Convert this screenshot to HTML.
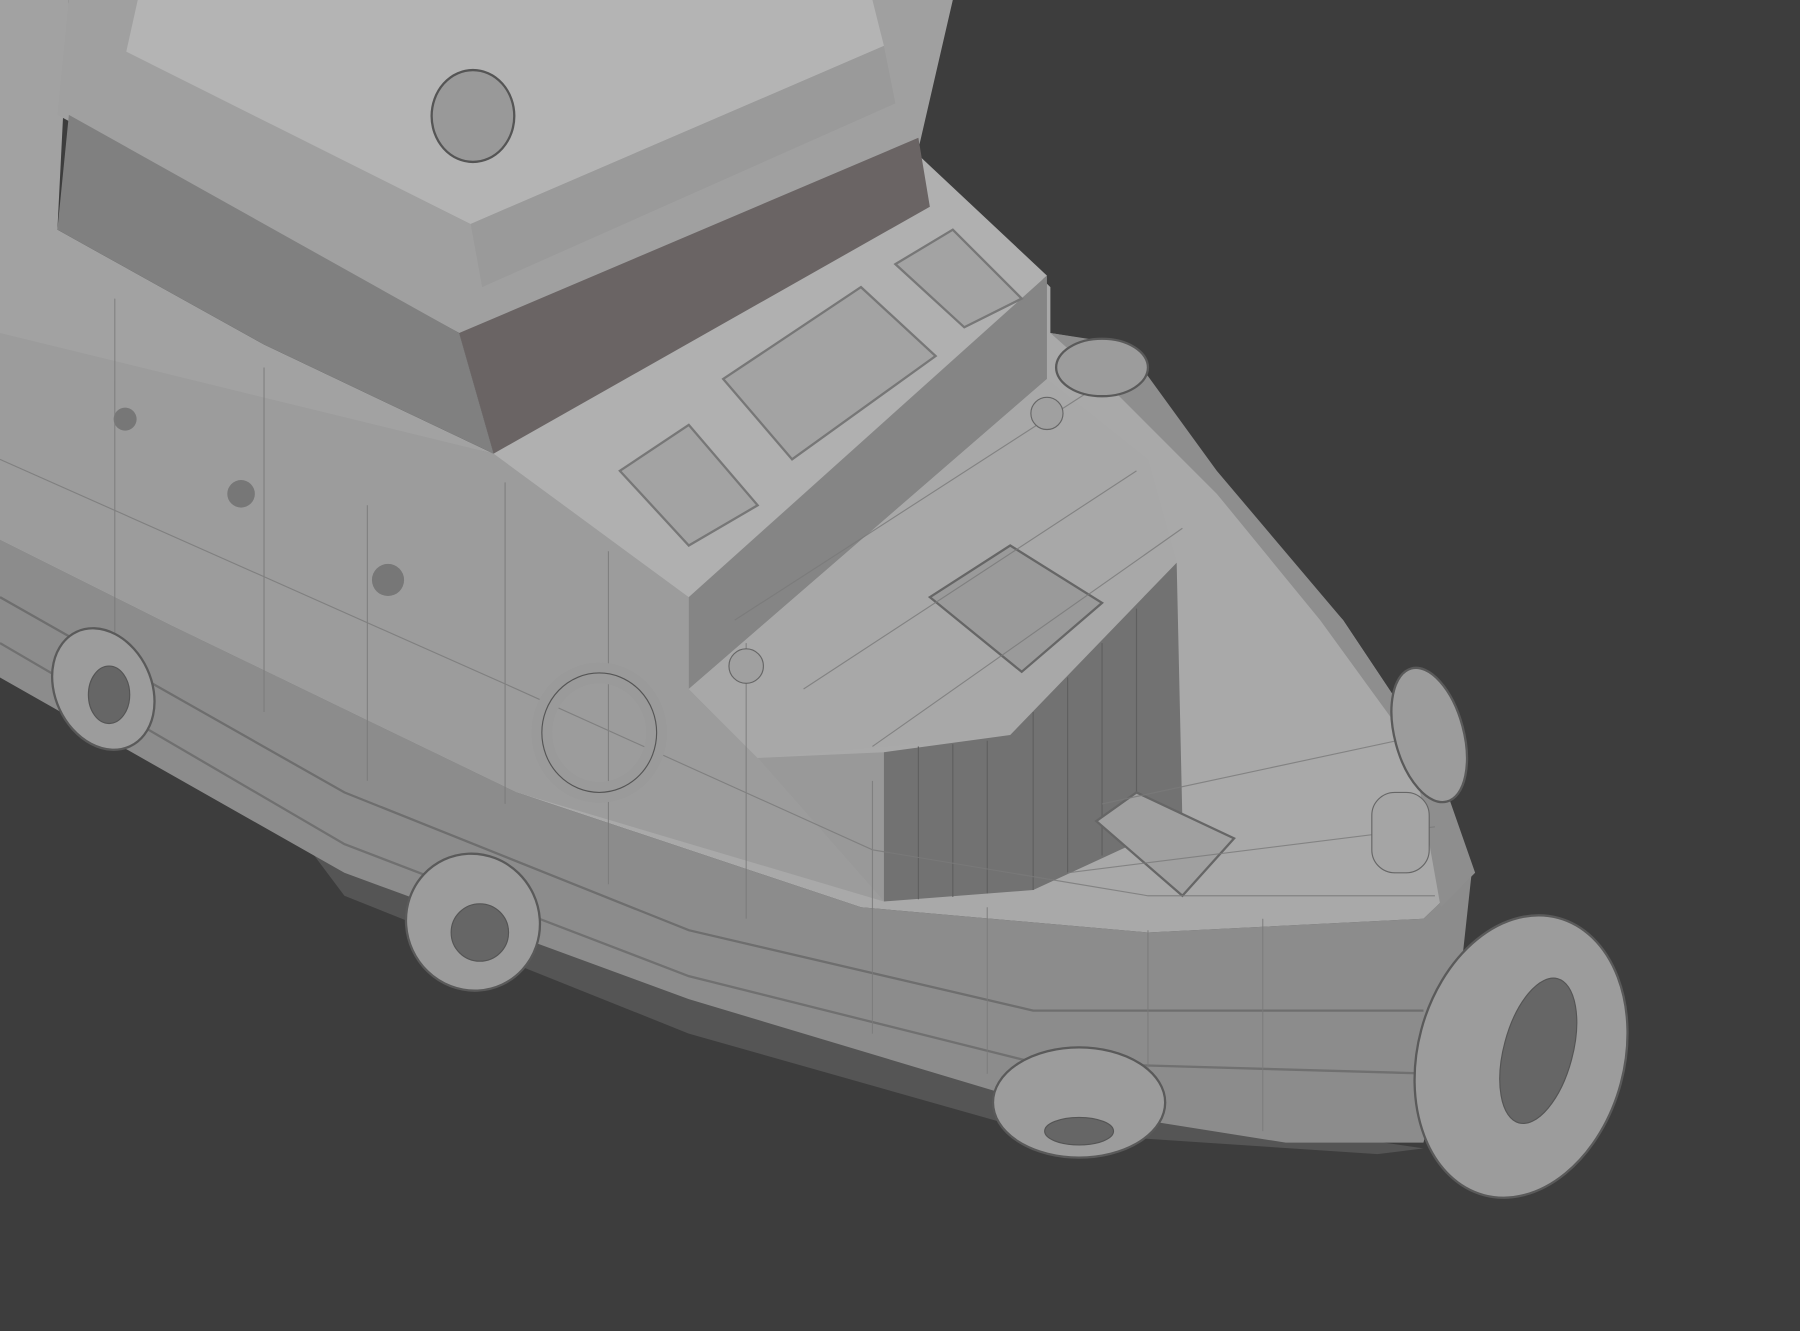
<!DOCTYPE html>
<html><head><meta charset="utf-8"><style>html,body{margin:0;padding:0;background:#3d3d3d;overflow:hidden}svg{display:block}</style></head>
<body>
<svg width="1800" height="1331" viewBox="0 0 1568 1159" preserveAspectRatio="none" xmlns="http://www.w3.org/2000/svg">
<rect width="1568" height="1159" fill="#3d3d3d"/>
<path d="M270,740 L600,860 L900,950 L1240,1000 L1200,1005 L900,985 L600,900 L300,780 Z" fill="#555"/>
<path d="M0,470 L150,545 L450,690 L750,790 L1000,812 L1240,800 L1282,760 L1270,870 L1240,995 L1120,995 L900,960 L600,870 L300,760 L0,590 Z" fill="#8c8c8c"/>
<path d="M0,520 L300,690 L600,810 L900,880 L1240,880" fill="none" stroke="#6e6e6e" stroke-width="2"/>
<path d="M0,560 L300,735 L600,850 L900,925 L1250,935" fill="none" stroke="#707070" stroke-width="2"/>
<path d="M0,0 L60,0 L50,200 L230,300 L430,395 L0,300 Z" fill="#a2a2a2"/>
<path d="M0,300 L430,395 L800,135 L915,250 L915,290 L975,300 L1060,420 L1170,540 L1250,660 L1282,760 L1240,800 L1000,812 L750,790 L450,690 L150,545 L0,470 Z" fill="#a9a9a9"/>
<path d="M915,290 L980,300 L1060,410 L1170,540 L1250,660 L1285,760 L1255,790 L1230,650 L1150,540 L1060,430 L960,330 Z" fill="#8e8e8e"/>
<path d="M0,290 L430,395 L600,520 L600,600 L660,660 L770,785 L450,690 L150,545 L0,470 Z" fill="#9c9c9c"/>
<path d="M430,395 L800,135 L912,240 L600,520 Z" fill="#b0b0b0"/>
<path d="M600,520 L912,240 L912,330 L600,600 Z" fill="#858585"/>
<path d="M600,600 L912,330 L1000,400 L1025,490 L880,640 L660,660 Z" fill="#a8a8a8"/>
<path d="M660,660 L770,655 L770,785 Z" fill="#999"/>
<path d="M770,655 L880,640 L1025,490 L1030,715 L900,775 L770,785 Z" fill="#727272"/>
<g stroke="#5f5f5f" stroke-width="1"><path d="M800,650 L800,783 M830,648 L830,781 M860,645 L860,778 M900,620 L900,775 M930,590 L930,760 M960,560 L960,745 M990,530 L990,730"/></g>
<path d="M50,100 L400,290 L430,395 L800,130 L830,0 L60,0 Z" fill="#a0a0a0"/>
<path d="M60,100 L400,290 L430,395 L230,300 L50,200 Z" fill="#808080"/>
<path d="M400,290 L800,120 L810,180 L430,395 Z" fill="#6a6464"/>
<path d="M110,45 L410,195 L770,40 L760,0 L120,0 Z" fill="#b4b4b4"/>
<path d="M410,195 L420,250 L780,90 L770,40 Z" fill="#9a9a9a"/>
<path d="M540,410 L600,370 L660,440 L600,475 Z" fill="#a3a3a3" stroke="#777" stroke-width="2"/>
<path d="M630,330 L750,250 L815,310 L690,400 Z" fill="#a3a3a3" stroke="#777" stroke-width="2"/>
<path d="M780,230 L830,200 L890,260 L840,285 Z" fill="#a3a3a3" stroke="#777" stroke-width="2"/>
<path d="M810,520 L880,475 L960,525 L890,585 Z" fill="#9a9a9a" stroke="#666" stroke-width="2"/>
<path d="M955,715 L990,690 L1075,730 L1030,780 Z" fill="#a0a0a0" stroke="#666" stroke-width="2"/>
<circle cx="109" cy="365" r="10" fill="#777"/><circle cx="210" cy="430" r="12" fill="#777"/><circle cx="338" cy="505" r="14" fill="#777"/>
<g stroke="#7a7a7a" stroke-width="1" fill="none" opacity="0.8">
<path d="M0,400 L450,600 L760,740 L1000,780 L1250,780"/>
<path d="M100,260 L100,560 M230,320 L230,620 M320,440 L320,680 M440,420 L440,700 M530,480 L530,770 M650,560 L650,800 M760,680 L760,900 M860,790 L860,935 M1000,810 L1000,960 M1100,800 L1100,985"/>
<path d="M640,540 L950,340 M700,600 L990,410 M760,650 L1030,460"/>
<path d="M960,700 L1240,640 M930,760 L1250,720"/>
</g>
<circle cx="650" cy="580" r="15" fill="#a0a0a0" stroke="#666"/><circle cx="912" cy="360" r="14" fill="#a0a0a0" stroke="#666"/>
<rect x="1195" y="690" width="50" height="70" rx="20" fill="#a5a5a5" stroke="#666"/>
<ellipse cx="522" cy="638" rx="50" ry="52" fill="none" stroke="#9a9a9a" stroke-width="18"/>
<ellipse cx="522" cy="638" rx="50" ry="52" fill="none" stroke="#555" stroke-width="1"/>
<ellipse cx="412" cy="101" rx="36" ry="40" fill="#999" stroke="#555" stroke-width="2"/>
<g fill="#9c9c9c" stroke="#5a5a5a" stroke-width="2">
<ellipse cx="90" cy="600" rx="42" ry="55" transform="rotate(-25 90 600)"/>
<ellipse cx="412" cy="803" rx="58" ry="60" transform="rotate(-25 412 803)"/>
<ellipse cx="940" cy="960" rx="75" ry="48"/>
<ellipse cx="1325" cy="920" rx="90" ry="125" transform="rotate(15 1325 920)"/>
<ellipse cx="1245" cy="640" rx="30" ry="60" transform="rotate(-15 1245 640)"/>
<ellipse cx="960" cy="320" rx="40" ry="25"/>
</g>
<g fill="#666" stroke="#555">
<ellipse cx="1340" cy="915" rx="30" ry="65" transform="rotate(15 1340 915)"/>
<ellipse cx="940" cy="985" rx="30" ry="12"/>
<ellipse cx="418" cy="812" rx="25" ry="25"/>
<ellipse cx="95" cy="605" rx="18" ry="25"/>
</g>
</svg>
</body></html>
